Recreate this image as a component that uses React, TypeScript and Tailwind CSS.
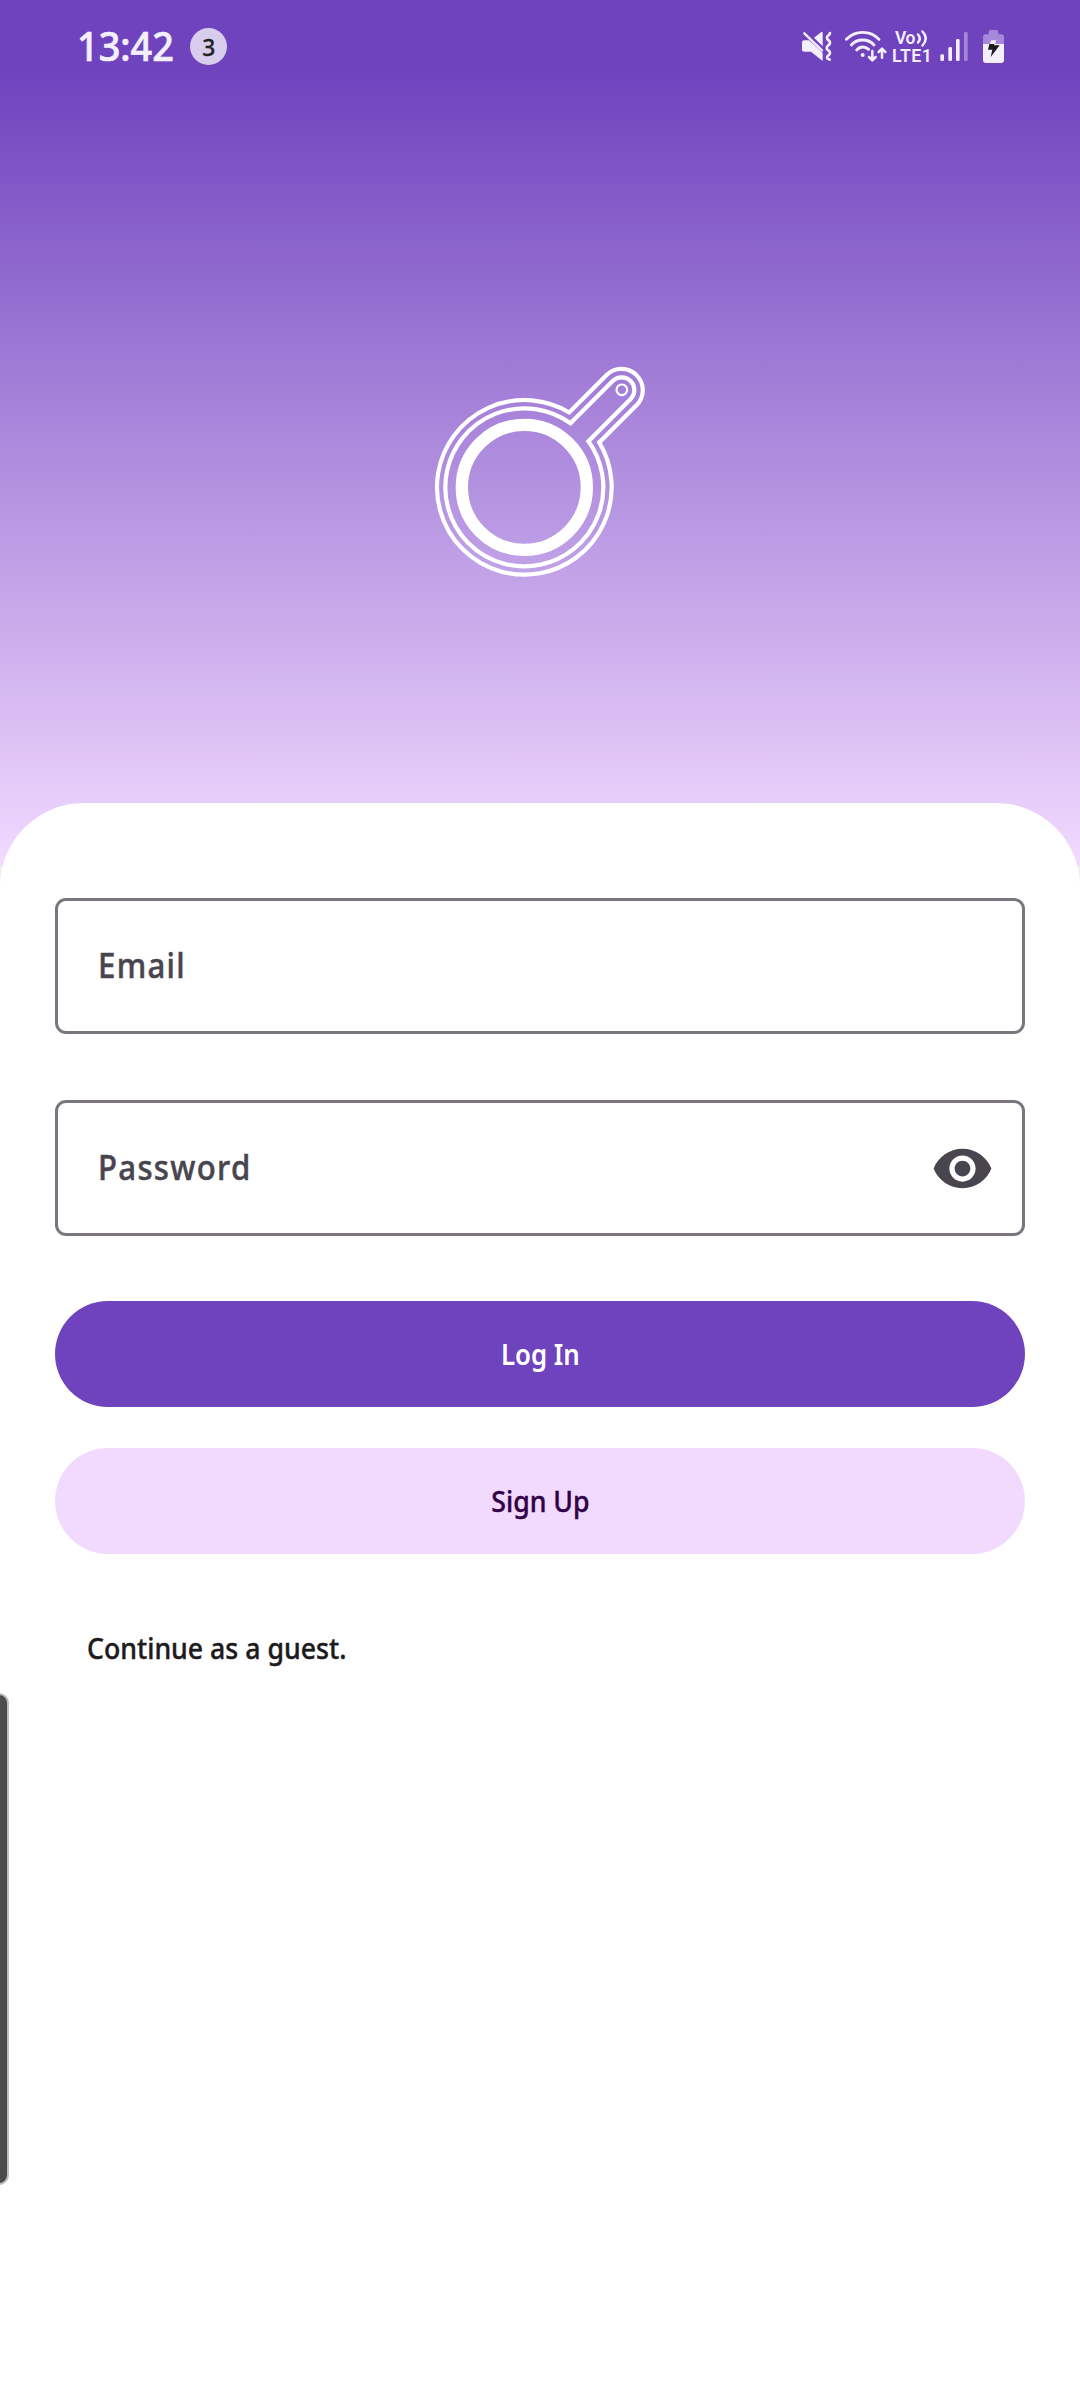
import React from "react";

function MuteIcon() {
  return (
    <svg className="h-[65px] w-[34px]" viewBox="33 0 102 195" fill="#f4effc">
      <path d="M43 76 H57 L98 113 V138 L63 110 H43 Q36 110 36 104 V82 Q36 76 43 76Z" />
      <path d="M72 68 L94 51 Q98 49 98 54 V94Z" />
      <path d="M43 55 L96 106" stroke="#f4effc" strokeWidth="7" strokeLinecap="round" />
      <path
        d="M120 54 C119 64 109 60 111 69 C112 77 121 76 120 84 C119 92 110 90 110 99 C110 107 121 106 120 114 C119 122 110 120 111 128 C112 133 118 131 119 134"
        fill="none"
        stroke="#f4effc"
        strokeWidth="8"
        strokeLinecap="round"
      />
    </svg>
  );
}

function WifiIcon() {
  return (
    <svg
      className="ml-[9px] h-[65px] w-[44px]"
      viewBox="162 0 132 195"
      fill="none"
      stroke="#f4effc"
      strokeWidth="8.5"
      strokeLinecap="round"
      strokeLinejoin="round"
    >
      <path d="M169 73 Q189 52 218 52 Q248 52 267 73" />
      <path d="M184 90 Q197 75 218 75 Q239 75 252 90" />
      <path d="M200 105 Q208 96 218 96 Q228 96 236 103" />
      <circle cx="218" cy="120" r="6" fill="#f4effc" stroke="none" />
      <path d="M247 108 V135 M237 126 L247 136 L257 126" strokeWidth="7.5" />
      <path d="M276 128 V102 M266 111 L276 101 L286 111" strokeWidth="7.5" />
    </svg>
  );
}

function VolteLabel() {
  return (
    <div className="ml-[3px] flex h-[65px] w-[42px] flex-col pt-[14px] font-[Roboto] font-semibold text-[#f4effc]">
      <div className="flex h-[18px] items-center pl-[4px]">
        <span className="w-[20px] text-[17.5px] leading-[18px] tracking-[-0.4px]">Vo</span>
        <svg className="h-[18px] w-[14px]" viewBox="0 0 14 18" fill="none" stroke="#f4effc" strokeWidth="2.5" strokeLinecap="round">
          <path d="M3 5.5 Q6.5 9.5 3 13.5" />
          <path d="M7.5 2.5 Q14 9.5 7.5 16.5" />
        </svg>
      </div>
      <span className="pl-px text-[17.7px] leading-[18px] tracking-[0.5px]">LTE1</span>
    </div>
  );
}

function SignalIcon() {
  return (
    <svg className="ml-[6px] h-[65px] w-[30px]" viewBox="447 0 90 195" fill="#f4effc">
      <rect x="451" y="118" width="11" height="20" rx="4" />
      <rect x="475" y="96" width="11" height="42" rx="4" />
      <rect x="498" y="72" width="11" height="66" rx="4" />
      <rect x="522" y="51" width="11" height="87" rx="4" opacity="0.4" />
    </svg>
  );
}

function BatteryIcon() {
  return (
    <svg className="ml-[13px] h-[65px] w-[23px]" viewBox="576 0 69 195">
      <path d="M579 87 V66 Q579 58 587 58 H596 V51 Q596 45 602 45 H619 Q625 45 625 51 V58 H634 Q642 58 642 66 V87Z" fill="#a588da" />
      <path d="M579 87 H642 V135 Q642 144 633 144 H588 Q579 144 579 135Z" fill="#f4effc" />
      <path d="M604 76 H619 L614 88 H599Z" fill="#f4effc" />
      <path d="M598 87 H613 L612 91 H629 L602 126 L607 104 H594Z" fill="#1b1b1b" />
    </svg>
  );
}

function StatusBar() {
  return (
    <div className="flex h-[80px] items-start justify-between pl-[77px] pr-[75px] text-[#f4effc]">
      <div className="flex pt-[28px]">
        <span className="-mt-px w-[113px] text-[39px] font-medium leading-[37px] [-webkit-text-stroke:0.7px_#f4effc]">
          <span className="inline-block origin-left scale-x-[0.97]">13:42</span>
        </span>
        <span className="flex size-[37px] items-center justify-center rounded-full bg-[#d9cdee] text-[24px] font-medium leading-none text-[#222222] [-webkit-text-stroke:0.3px_#222222]">
          <span className="scale-x-95">3</span>
        </span>
      </div>
      <div className="flex pt-[15px]">
        <MuteIcon />
        <WifiIcon />
        <VolteLabel />
        <SignalIcon />
        <BatteryIcon />
      </div>
    </div>
  );
}

function PanLogo() {
  return (
    <svg className="size-[240px]" viewBox="0 0 720 720" fill="none" stroke="#ffffff" strokeWidth="12.5">
      <path d="M447.7 187.3 A262 262 0 1 0 537.7 277.3 L650.25 165.25 A64 64 0 0 0 559.75 74.75 Z" />
      <path d="M451.5 219.7 A237 237 0 1 0 505.3 273.5 L631.9 146.9 A38 38 0 0 0 578.1 93.1 Z" />
      <circle cx="313" cy="412" r="187.5" strokeWidth="37" />
      <circle cx="605.5" cy="119.5" r="16" strokeWidth="6.5" />
    </svg>
  );
}

function Field({ label, children }: { label: string; children?: React.ReactNode }) {
  return (
    <div className="flex h-[136px] items-center justify-between rounded-[11px] border-[3px] border-[#7a757f] pl-[40px] pr-[28px]">
      <span className="-mt-px inline-block origin-left scale-x-[0.93] text-[33.5px] font-medium leading-none tracking-[1.4px] text-[#49454f] [-webkit-text-stroke:0.5px_#49454f]">
        {label}
      </span>
      {children}
    </div>
  );
}

function EyeIcon() {
  return (
    <svg className="size-[63px]" viewBox="0 0 24 24" fill="#49454f">
      <path d="M12 4.5C7 4.5 2.73 7.61 1 12c1.73 4.39 6 7.5 11 7.5s9.27-3.11 11-7.5c-1.73-4.39-6-7.5-11-7.5zM12 17c-2.76 0-5-2.24-5-5s2.24-5 5-5 5 2.24 5 5-2.24 5-5 5zm0-8c-1.66 0-3 1.34-3 3s1.34 3 3 3 3-1.34 3-3-1.34-3-3-3z" />
    </svg>
  );
}

export default function App() {
  return (
    <div className="relative flex h-[2400px] w-[1080px] flex-col overflow-hidden bg-[#f2edf0] font-['Noto_Sans',sans-serif]">
      <header className="h-[866px] shrink-0 bg-[linear-gradient(to_bottom,#6f43be_74px,#f2daff_866px)]">
        <StatusBar />
        <div className="flex justify-center pt-[270px]">
          <PanLogo />
        </div>
      </header>
      <main className="-mt-[63px] flex grow flex-col rounded-t-[84px] bg-white px-[55px] pt-[95px]">
        <Field label="Email" />
        <div className="mt-[66px]">
          <Field label="Password">
            <EyeIcon />
          </Field>
        </div>
        <button className="mt-[65px] h-[106px] rounded-full bg-[#6f43be] text-[29px] font-semibold text-white">
          <span className="inline-block scale-x-[0.89]">Log In</span>
        </button>
        <button className="mt-[41px] h-[106px] rounded-full bg-[#f2daff] text-[29px] font-medium text-[#310048] [-webkit-text-stroke:0.4px_#310048]">
          <span className="inline-block scale-x-[0.92]">Sign Up</span>
        </button>
        <a className="mt-[74px] pl-[32px] text-[29px] font-medium leading-[40px] text-[#1d1b20] [-webkit-text-stroke:0.4px_#1d1b20]">
          <span className="inline-block origin-left scale-x-[0.92]">Continue as a guest.</span>
        </a>
      </main>
      <div className="absolute -left-[20px] top-[1693px] h-[492px] w-[29px] rounded-[10px] border-2 border-[#bdbdbd] bg-[#4d4d4d]" />
    </div>
  );
}
